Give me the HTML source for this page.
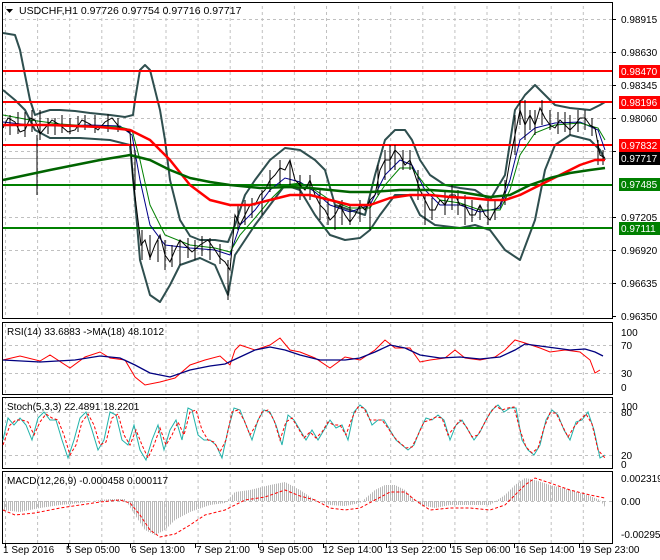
<!DOCTYPE html>
<html><head><meta charset="utf-8"><style>
html,body{margin:0;padding:0;background:#fff;}
svg{display:block;font-family:"Liberation Sans",sans-serif;font-size:10px;}
</style></head><body>
<svg width="660" height="560" viewBox="0 0 660 560" xmlns="http://www.w3.org/2000/svg">
<defs>
<pattern id="vg" x="5" y="0" width="32.1" height="560" patternUnits="userSpaceOnUse">
<line x1="0.5" y1="0" x2="0.5" y2="560" stroke="#c0c0c0" stroke-dasharray="3,3"/>
</pattern>
<pattern id="hs" x="0" y="0" width="2" height="10" patternUnits="userSpaceOnUse">
<rect x="0" y="0" width="1" height="10" fill="#b8b8b8"/>
</pattern>
</defs>
<rect width="660" height="560" fill="#fff"/>
<rect x="3" y="3" width="609" height="315" fill="url(#vg)"/>
<rect x="3" y="323" width="609" height="71" fill="url(#vg)"/>
<rect x="3" y="398" width="609" height="70" fill="url(#vg)"/>
<rect x="3" y="472" width="609" height="71" fill="url(#vg)"/>
<g stroke="#c0c0c0" stroke-dasharray="3,3">
<line x1="3" y1="19.5" x2="612" y2="19.5"/><line x1="3" y1="52.5" x2="612" y2="52.5"/>
<line x1="3" y1="85.5" x2="612" y2="85.5"/><line x1="3" y1="118.5" x2="612" y2="118.5"/>
<line x1="3" y1="151.5" x2="612" y2="151.5"/><line x1="3" y1="184.5" x2="612" y2="184.5"/>
<line x1="3" y1="217.5" x2="612" y2="217.5"/><line x1="3" y1="250.5" x2="612" y2="250.5"/>
<line x1="3" y1="283.5" x2="612" y2="283.5"/>
<line x1="3" y1="345.5" x2="612" y2="345.5"/><line x1="3" y1="373.5" x2="612" y2="373.5"/>
<line x1="3" y1="412.5" x2="612" y2="412.5"/><line x1="3" y1="455.5" x2="612" y2="455.5"/>
<line x1="3" y1="501.5" x2="612" y2="501.5"/>
</g>
<line x1="3" y1="158.5" x2="612" y2="158.5" stroke="#c0c0c0"/>
<g fill="none" stroke="#000">
<rect x="2.5" y="2.5" width="610" height="316"/>
<rect x="2.5" y="322.5" width="610" height="72"/>
<rect x="2.5" y="397.5" width="610" height="71"/>
<rect x="2.5" y="471.5" width="610" height="72"/>
</g>
<g fill="none" stroke="#2f4f4f" stroke-width="2" stroke-linejoin="round">
<polyline points="3,33 15,35 20,50 25,75 30,100 35,115 40,113 50,110 60,110 75,111 90,113 110,115 125,117 133,115 135,100 140,70 145,65 150,70 160,110 165,140 170,180 180,220 190,236 200,240 215,240 228,242 235,225 245,195 255,180 270,160 285,148 300,150 315,160 325,170 335,205 350,210 365,215 375,175 385,140 395,130 405,130 412,140 420,160 430,175 445,185 460,188 475,190 490,200 505,175 515,110 525,95 535,85 545,95 555,105 570,108 590,110 600,105 605,102"/>
<polyline points="3,90 15,100 25,110 30,120 35,130 50,138 80,138 110,140 130,145 135,200 140,260 150,295 160,302 170,285 180,265 200,258 215,265 228,295 235,255 245,240 255,225 270,205 285,185 300,190 315,215 330,235 345,240 360,238 370,230 380,215 395,195 410,195 420,215 435,225 460,228 475,225 490,230 505,250 520,260 535,220 545,170 555,145 570,135 590,140 600,150 605,160"/>
</g>
<g stroke-width="2">
<line x1="3" y1="71" x2="612" y2="71" stroke="#ff0000"/>
<line x1="3" y1="102" x2="612" y2="102" stroke="#ff0000"/>
<line x1="3" y1="145" x2="612" y2="145" stroke="#ff0000"/>
<line x1="3" y1="185" x2="612" y2="185" stroke="#008000"/>
<line x1="3" y1="228" x2="612" y2="228" stroke="#008000"/>
</g>
<g fill="none" stroke-width="1">
<polyline stroke="#00008b" points="3,122 30,125 60,126 90,125 120,126 132,135 140,180 150,225 165,245 190,248 215,250 230,255 240,225 255,210 270,190 285,178 300,182 315,192 330,205 350,212 370,205 385,175 400,160 412,165 425,190 440,205 460,205 480,212 500,208 510,180 520,140 535,128 555,123 580,122 598,130 605,150"/>
<polyline stroke="#008000" points="3,115 30,120 60,124 90,126 120,127 132,130 140,160 150,205 165,235 190,245 215,248 230,252 240,235 255,218 270,200 285,185 300,183 315,190 330,200 350,208 370,208 385,185 400,168 412,168 425,185 440,200 460,203 480,210 500,210 510,190 520,155 535,133 555,125 580,123 598,128 605,140"/>
<polyline stroke="#000" points="3,128 8,118 15,122 20,132 25,130 30,118 35,120 40,134 45,128 52,120 60,125 68,132 75,130 82,120 90,124 98,130 105,122 112,118 120,128 130,132 133,180 138,220 141,245 145,240 150,258 155,245 160,235 165,255 170,262 175,250 180,240 185,245 192,252 200,245 208,240 215,250 220,258 225,262 230,270 235,215 240,225 245,215 250,205 255,205 260,195 265,190 270,180 275,175 280,168 285,170 290,160 295,180 300,185 305,190 310,180 315,195 320,205 325,210 330,220 335,215 340,205 345,215 350,222 355,215 360,205 365,210 370,200 375,195 380,170 385,160 390,160 395,150 400,155 405,165 410,160 415,175 420,190 425,200 430,210 435,210 440,200 445,205 450,195 455,195 460,205 465,205 470,215 475,215 480,205 485,215 490,220 495,210 500,205 505,190 510,160 515,135 520,110 525,125 530,115 535,125 540,108 545,118 550,125 555,128 560,120 565,125 570,130 575,125 580,118 585,118 590,125 595,128 600,155 605,158"/>
</g>
<g stroke="#000" stroke-width="1">
<path d="M10 115v20M18 112v22M25 112v25M32 110v22M40 110v30M37 135v60M48 118v16M55 118v17M62 115v18M70 118v16M78 116v16M85 115v15M95 115v18M108 114v18M118 118v14M135 150v40M142 230v30M150 235v25M158 240v22M165 240v30M172 245v22M180 240v25M188 238v20M195 240v20M202 236v20M210 238v22M220 244v20M228 260v40M238 205v25M245 200v25M252 198v20M262 190v25M270 170v22M280 160v25M290 160v25M300 175v25M310 175v25M320 190v30M328 200v25M335 205v25M342 200v25M350 205v20M360 200v22M370 200v30M378 165v30M385 150v30M390 145v25M395 145v25M403 150v20M410 150v20M418 170v30M425 195v30M432 198v22M445 190v25M452 185v25M458 190v25M465 195v30M472 200v22M480 205v15M488 200v25M495 200v20M505 180v25M515 115v40M520 100v25M525 100v40M530 110v20M535 110v25M542 100v25M550 110v20M558 112v22M565 112v20M570 115v20M578 110v22M585 110v20M592 118v18M598 140v25M603 150v15"/>
</g>
<g fill="none" stroke-width="2.5" stroke-linejoin="round">
<polyline stroke="#ff0000" points="3,125 50,125 100,127 130,130 150,140 170,160 190,185 210,200 230,205 250,205 270,200 290,195 310,195 330,200 350,205 370,205 390,198 410,195 430,195 450,197 470,198 490,200 505,200 520,195 540,185 560,175 580,165 595,160 605,160"/>
<polyline stroke="#006400" points="3,180 50,170 100,160 130,155 150,160 170,170 190,178 210,182 230,185 260,188 290,187 310,188 330,190 350,192 370,192 400,190 430,190 460,192 490,197 510,195 530,185 550,178 570,173 590,170 605,168"/>
</g>
<path d="M6 9h7l-3.5 4z" fill="#000"/>
<text x="19" y="14" fill="#000" font-size="10.5">USDCHF,H1  0.97726 0.97754 0.97716 0.97717</text>
<g fill="#000">
<text x="621" y="23">0.98915</text><text x="621" y="56">0.98630</text>
<text x="621" y="89">0.98345</text><text x="621" y="122">0.98060</text>
<text x="621" y="221">0.97205</text><text x="621" y="254">0.96920</text>
<text x="621" y="287">0.96635</text><text x="621" y="320">0.96350</text>
</g>
<g stroke="#000"><path d="M612 19.5h4M612 52.5h4M612 85.5h4M612 118.5h4M612 151.5h4M612 217.5h4M612 250.5h4M612 283.5h4M612 316.5h4"/></g>
<rect x="619" y="65" width="41" height="13" fill="#ff0000"/><text x="621" y="75" fill="#fff">0.98470</text>
<rect x="619" y="96" width="41" height="13" fill="#ff0000"/><text x="621" y="106" fill="#fff">0.98196</text>
<rect x="619" y="139" width="41" height="13" fill="#ff0000"/><text x="621" y="149" fill="#fff">0.97832</text>
<rect x="619" y="152" width="41" height="13" fill="#000"/><text x="621" y="162" fill="#fff">0.97717</text>
<rect x="619" y="178" width="41" height="13" fill="#008000"/><text x="621" y="188" fill="#fff">0.97485</text>
<rect x="619" y="222" width="41" height="13" fill="#008000"/><text x="621" y="232" fill="#fff">0.97111</text>
<text x="7" y="335">RSI(14) 33.6883  -&gt;MA(18) 48.1012</text>
<polyline fill="none" stroke="#ff0000" points="3,360 20,356 40,361 50,355 70,368 85,357 100,352 110,358 125,360 135,377 145,385 160,382 175,378 190,365 205,360 220,356 230,365 235,350 240,345 255,350 270,345 280,338 290,350 300,352 315,358 330,368 345,357 360,360 375,350 380,345 385,340 395,348 410,348 420,362 430,360 445,358 455,350 465,358 480,360 495,357 505,350 515,340 525,343 540,348 550,352 565,350 580,352 590,360 595,373 600,370"/>
<polyline fill="none" stroke="#000080" stroke-width="1.3" points="3,360 40,362 75,360 100,356 120,358 135,365 150,373 170,377 190,370 210,366 225,364 240,357 255,350 270,347 285,350 300,355 320,360 345,360 360,358 375,352 390,345 405,348 420,355 440,358 460,357 480,359 500,357 515,350 525,344 540,346 555,348 570,350 585,349 595,352 603,356"/>
<g fill="#000"><text x="621" y="336">100</text><text x="621" y="349">70</text><text x="621" y="377">30</text><text x="621" y="391">0</text></g>
<text x="7" y="410">Stoch(5,3,3) 22.4891 18.2201</text>
<polyline fill="none" stroke="#20b2aa" points="3,440 8,418 14,425 20,418 26,425 32,440 38,418 44,412 50,420 56,420 62,440 68,458 74,440 80,418 86,412 92,430 98,450 104,440 110,412 116,415 122,440 128,445 134,425 140,450 146,460 152,440 158,425 164,450 170,430 176,420 182,440 188,408 192,410 198,435 204,440 210,440 216,445 222,458 228,430 234,408 240,410 246,425 252,440 258,420 264,410 270,412 276,425 282,445 288,415 294,420 300,430 306,440 312,430 318,440 324,430 330,420 336,428 342,425 348,440 354,412 360,405 366,410 372,425 378,420 384,420 390,430 396,440 402,445 408,450 414,445 420,430 426,418 432,420 438,415 444,420 450,440 456,425 462,420 468,430 474,440 480,432 486,420 492,410 498,405 504,412 510,408 516,408 522,440 528,450 534,455 540,445 546,420 552,410 558,415 564,430 570,440 576,422 582,420 588,412 594,430 600,458 605,455"/>
<polyline fill="none" stroke="#ff0000" stroke-dasharray="3,2" points="3,445 10,425 16,420 22,420 28,422 34,435 40,422 46,414 52,418 58,420 64,435 70,455 76,445 82,422 88,414 94,425 100,445 106,442 112,418 118,414 124,435 130,445 136,430 142,445 148,458 154,445 160,428 166,445 172,435 178,422 184,435 190,412 196,410 202,430 208,440 214,442 220,452 226,440 232,412 238,410 244,420 250,435 256,425 262,412 268,410 274,420 280,440 286,422 292,418 298,428 304,438 310,432 316,438 322,432 328,422 334,425 340,425 346,435 352,418 358,407 364,408 370,420 376,420 382,420 388,428 394,437 400,443 406,448 412,447 418,435 424,422 430,420 436,417 442,418 448,435 454,428 460,420 466,426 472,437 478,435 484,424 490,413 496,406 502,410 508,408 514,407 520,430 526,447 532,453 538,448 544,428 550,413 556,413 562,425 568,437 574,427 580,420 586,414 592,424 598,450 605,458"/>
<g fill="#000"><text x="621" y="410">100</text><text x="621" y="416">80</text><text x="621" y="459">20</text><text x="621" y="468">0</text></g>
<text x="7" y="484">MACD(12,26,9) -0.000458 0.000117</text>
<polygon fill="url(#hs)" points="3,501 3,510 20,512 40,508 60,505 80,503 100,500 110,499 125,499 135,515 145,530 155,535 165,530 175,520 190,512 210,505 225,503 235,492 250,490 270,485 285,482 300,490 315,500 330,505 345,506 360,503 375,490 385,485 395,485 405,490 420,505 435,508 450,505 470,505 490,505 505,495 515,485 525,478 535,480 550,485 570,490 590,496 600,500 605,507 605,501"/>
<polyline fill="none" stroke="#ff0000" stroke-dasharray="3,2" points="3,510 15,515 35,513 60,508 80,505 100,502 120,500 130,503 140,515 150,530 160,537 175,534 190,525 205,515 225,510 235,505 245,500 265,497 285,490 300,496 315,500 330,508 345,510 360,508 375,500 390,492 405,492 415,500 430,510 450,508 470,508 490,510 505,505 515,495 525,485 535,478 550,483 570,490 590,495 605,498"/>
<g fill="#000"><text x="621" y="482">0.002319</text><text x="621" y="505">0.00</text><text x="621" y="538">-0.002953</text></g>
<g stroke="#000"><path d="M5.5 544v4M68.5 544v4M130.5 544v4M195.5 544v4M258.5 544v4M323.5 544v4M386.5 544v4M450.5 544v4M514.5 544v4M579.5 544v4"/></g>
<g fill="#000">
<text x="3" y="553">1 Sep 2016</text><text x="66" y="553">5 Sep 05:00</text>
<text x="131" y="553">6 Sep 13:00</text><text x="196" y="553">7 Sep 21:00</text>
<text x="259" y="553">9 Sep 05:00</text><text x="323" y="553">12 Sep 14:00</text>
<text x="387" y="553">13 Sep 22:00</text><text x="451" y="553">15 Sep 06:00</text>
<text x="515" y="553">16 Sep 14:00</text><text x="580" y="553">19 Sep 23:00</text>
</g>
</svg>
</body></html>
